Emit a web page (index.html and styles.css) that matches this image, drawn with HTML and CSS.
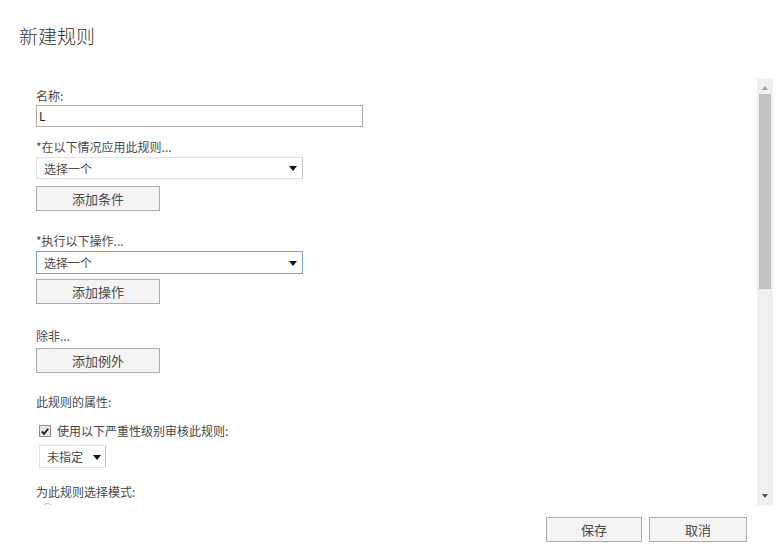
FILE: index.html
```html
<!DOCTYPE html>
<html lang="zh-CN">
<head>
<meta charset="utf-8">
<title>新建规则</title>
<link rel="stylesheet" href="styles.css">
</head>
<body>
<h1 class="title">新建规则</h1>
<div class="pane">
  <div class="content">
    <div class="label first">名称:</div>
    <div class="input">L</div>

    <div class="label l2">*在以下情况应用此规则...</div>
    <div class="select sel1"><span>选择一个</span><span class="arrow"></span></div>
    <div class="btn addbtn">添加条件</div>

    <div class="label l3">*执行以下操作...</div>
    <div class="select sel2 focus"><span>选择一个</span><span class="arrow"></span></div>
    <div class="btn addbtn b2">添加操作</div>

    <div class="label l4">除非...</div>
    <div class="btn addbtn b3">添加例外</div>

    <div class="label l5">此规则的属性:</div>
    <div class="check-row">
      <span class="checkbox"><svg width="11" height="11" viewBox="0 0 11 11"><path d="M2 5.5 L4.5 8 L9 2.5" fill="none" stroke="#222" stroke-width="2"/></svg></span>
      <span>使用以下严重性级别审核此规则:</span>
    </div>
    <div class="select small"><span>未指定</span><span class="arrow"></span></div>

    <div class="label l6">为此规则选择模式:</div>
    <div class="radio-row"><span class="radio"></span></div>
  </div>
  <div class="scrollbar">
    <div class="sb-arrow up"></div>
    <div class="thumb"></div>
    <div class="sb-space"></div>
    <div class="sb-arrow down"></div>
  </div>
</div>
<div class="footer">
  <div class="btn fbtn save">保存</div>
  <div class="btn fbtn cancel">取消</div>
</div>
</body>
</html>
```
FILE: styles.css
```css
html, body {
  margin: 0;
  padding: 0;
  background: #fff;
}
body {
  width: 779px;
  height: 553px;
  overflow: hidden;
  font-family: "Noto Sans CJK SC", "Noto Sans", sans-serif;
  font-size: 12px;
  color: #444;
}
.title {
  margin: 22px 0 0 19px;
  font-size: 19px;
  line-height: 28px;
  font-weight: 300;
  color: #333;
}
.pane {
  display: flex;
  height: 426px;
  margin-top: 29px;
}
.content {
  flex: 1;
  overflow: hidden;
  padding-left: 36px;
  display: flex;
  flex-direction: column;
  align-items: flex-start;
}
.content > * { flex-shrink: 0; }
.label {
  line-height: 16px;
  height: 16px;
  color: #4a4a4a;
}
.label.first { margin-top: 9px; }
.label.l2 { margin-top: 12px; }
.label.l3 { margin-top: 22px; }
.label.l4 { margin-top: 24px; }
.label.l5 { margin-top: 21px; }
.label.l6 { margin-top: 16px; }

.input {
  box-sizing: border-box;
  margin-top: 1px;
  width: 327px;
  height: 22px;
  border: 1px solid #ababab;
  padding-left: 2px;
  line-height: 20px;
  color: #222;
}
.select {
  box-sizing: border-box;
  margin-top: 2px;
  width: 267px;
  height: 22px;
  border: 1px solid #e3e3e3;
  border-right-color: #c6c6c6;
  display: flex;
  align-items: center;
  justify-content: space-between;
  padding: 0 5px 0 7px;
  color: #4a4a4a;
}
.select.focus {
  border-color: #7da2ce;
  height: 23px;
}
.arrow {
  width: 0;
  height: 0;
  border-left: 4px solid transparent;
  border-right: 4px solid transparent;
  border-top: 5px solid #111;
  margin-top: 1px;
}
.btn {
  box-sizing: border-box;
  border: 1px solid #ababab;
  background: #f4f4f4;
  color: #4a4a4a;
  text-align: center;
  font-size: 13px;
}
.addbtn {
  margin-top: 7px;
  width: 124px;
  height: 25px;
  line-height: 23px;
}
.addbtn.b2 { margin-top: 5px; }
.addbtn.b3 { margin-top: 4px; }

.check-row {
  margin-top: 13px;
  margin-left: 3px;
  height: 16px;
  display: flex;
  align-items: center;
  gap: 6px;
  line-height: 16px;
}
.checkbox {
  box-sizing: border-box;
  width: 12px;
  height: 12px;
  border: 1px solid #8f8f8f;
  background: #e6e6e6;
  display: flex;
  align-items: center;
  justify-content: center;
}
.checkbox svg { display: block; }
.select.small {
  margin-top: 6px;
  margin-left: 3px;
  width: 67px;
  height: 23px;
  padding: 0 4px 0 7px;
}
.radio-row {
  margin-top: 3px;
  margin-left: 5px;
  height: 14px;
}
.radio {
  display: block;
  box-sizing: border-box;
  width: 13px;
  height: 13px;
  border: 1px solid #bbb;
  border-radius: 50%;
}

.scrollbar {
  width: 16px;
  margin-right: 6px;
  background: #f0f0f0;
  display: flex;
  flex-direction: column;
  align-items: center;
}
.sb-arrow {
  width: 0;
  height: 0;
  border-left: 3px solid transparent;
  border-right: 3px solid transparent;
}
.sb-arrow.up {
  margin-top: 7px;
  border-bottom: 4px solid #a0a0a0;
}
.thumb {
  margin-top: 4px;
  width: 12px;
  height: 195px;
  background: #c1c1c1;
}
.sb-space { flex: 1; }
.sb-arrow.down {
  margin-bottom: 7px;
  border-top: 4px solid #505050;
}

.footer {
  display: flex;
  justify-content: flex-end;
  gap: 7px;
  margin-top: 12px;
  padding-right: 32px;
}
.fbtn {
  height: 25px;
  line-height: 23px;
}
.fbtn.save { width: 96px; }
.fbtn.cancel { width: 98px; }
```
